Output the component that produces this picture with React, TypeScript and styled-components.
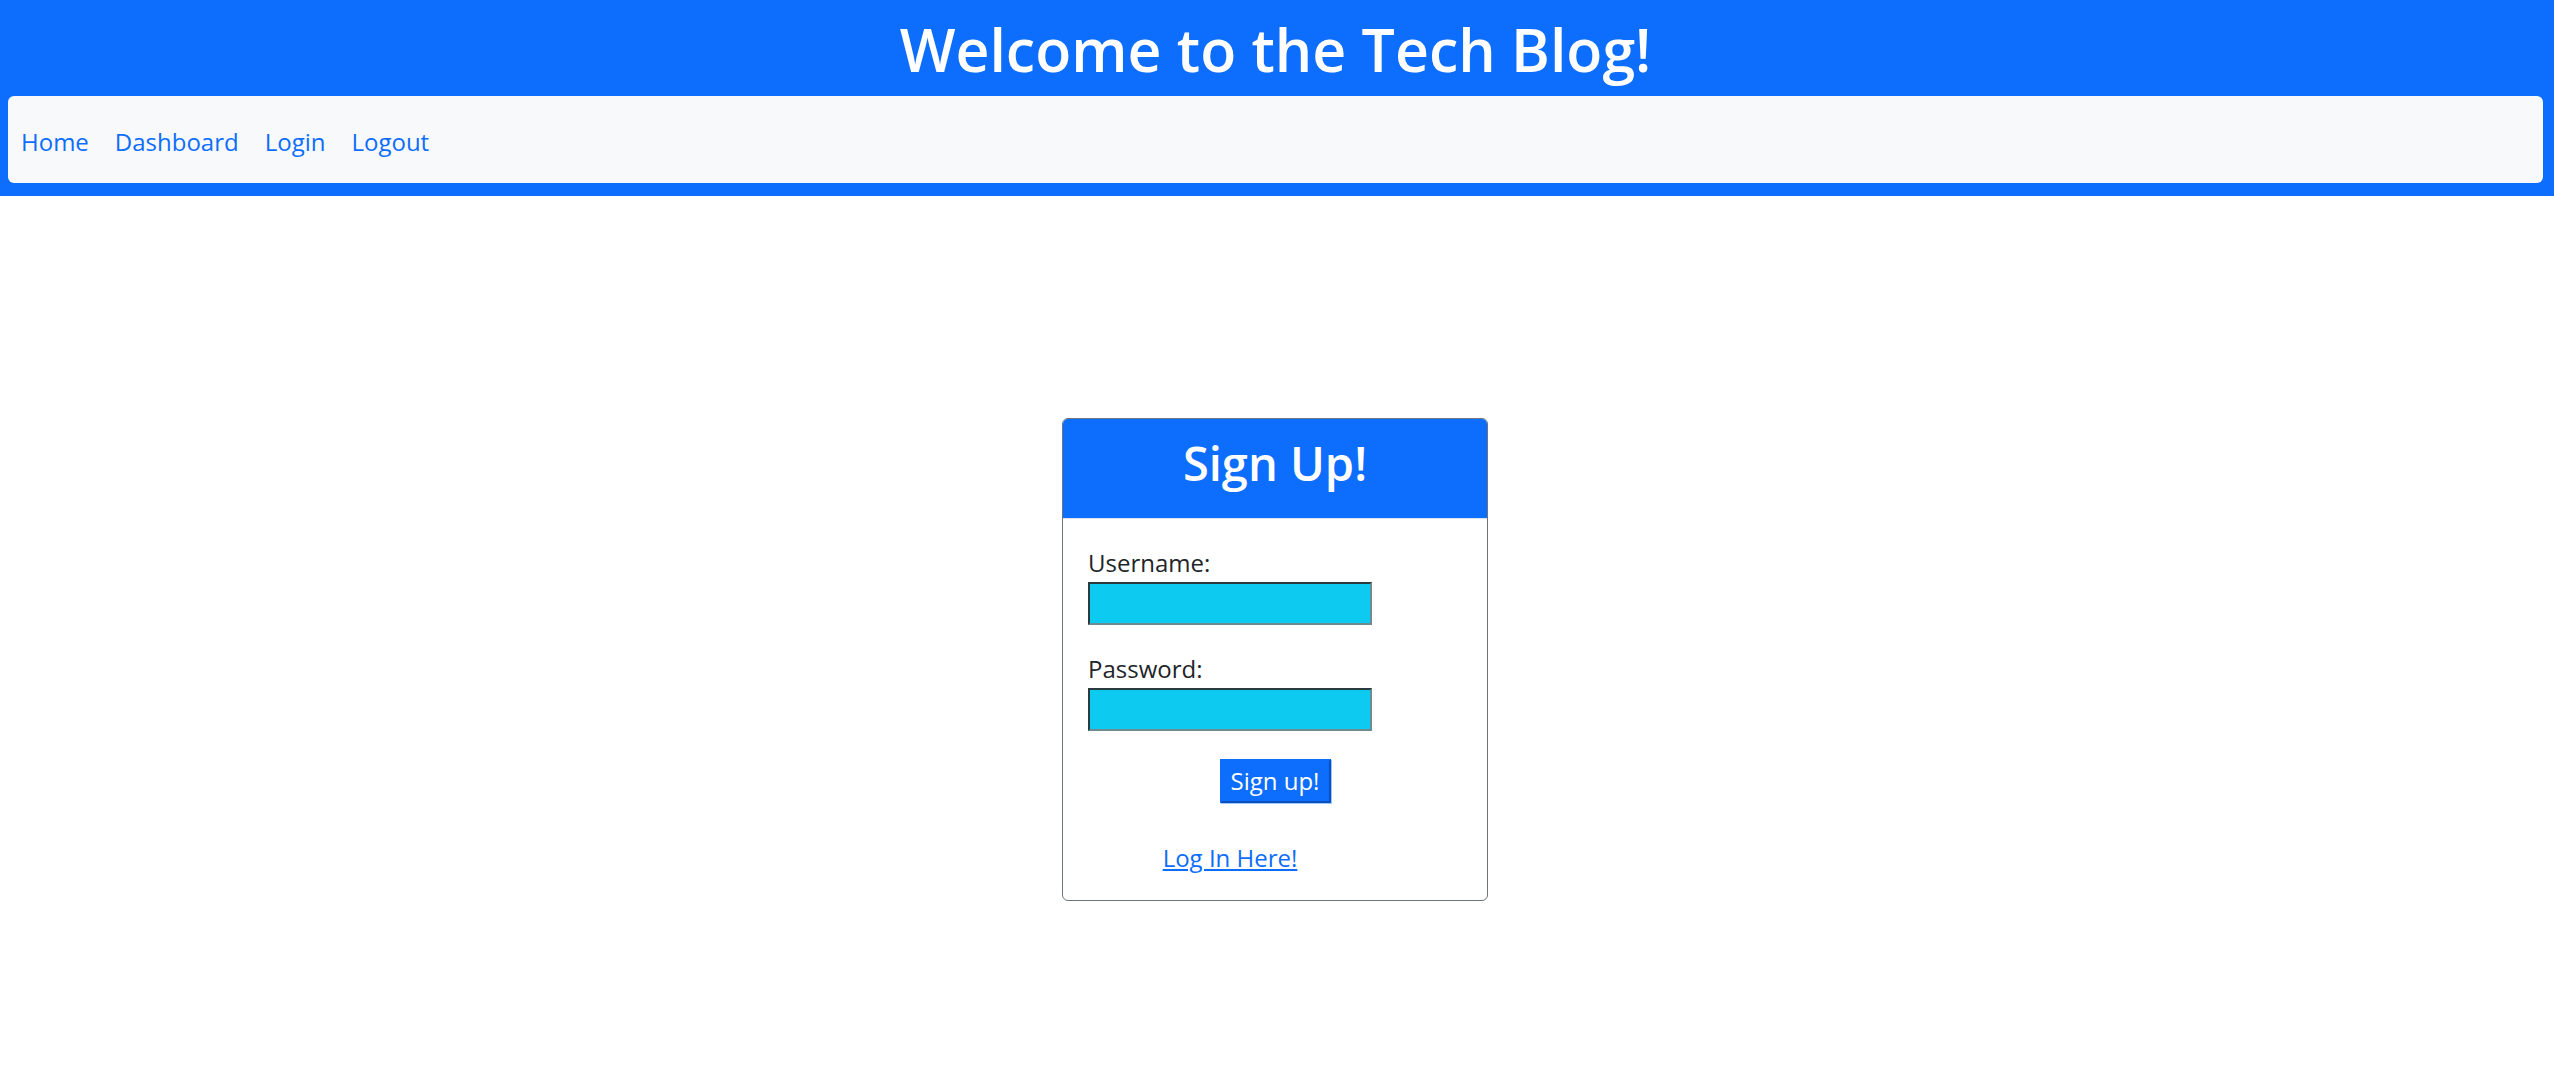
import React from "react"
import styled, {createGlobalStyle} from "styled-components"

const GlobalStyle = createGlobalStyle`
  body {
    margin: 0;
    background: #ffffff;
    font-family: "Open Sans", "Noto Sans", sans-serif;
    color: #212529;
  }
`

const Header = styled.header`
  background: #0d6efd;
  padding: 0 11px 13px 8px;
`

const Title = styled.h1`
  margin: 0;
  height: 96px;
  padding-top: 2px;
  box-sizing: border-box;
  line-height: 94px;
  font-size: 59px;
  font-weight: 600;
  color: #ffffff;
  text-align: center;
`

const NavBar = styled.nav`
  display: flex;
  align-items: flex-start;
  height: 87px;
  box-sizing: border-box;
  padding: 27px 0 22px;
  background: #f8f9fa;
  border-radius: 6px;
`

const NavLink = styled.a`
  padding: 0 13px;
  font-size: 24px;
  line-height: 38px;
  color: #0d6efd;
  text-decoration: none;
  cursor: pointer;
`

const Main = styled.main`
  display: flex;
  justify-content: center;
  padding: 222px 4px 0 0;
`

const Card = styled.div`
  width: 426px;
  box-sizing: border-box;
  border: 1px solid #6c757d;
  border-radius: 6px;
  overflow: hidden;
  background: #ffffff;
`

const CardHeader = styled.div`
  height: 100px;
  box-sizing: border-box;
  padding-bottom: 12px;
  border-bottom: 1px solid #dde3ea;
  background: #0d6efd;
  color: #ffffff;
  text-align: center;
`

const CardTitle = styled.h2`
  margin: 0;
  font-size: 47px;
  font-weight: 600;
  line-height: 88px;
`

const Form = styled.form`
  display: flex;
  flex-direction: column;
  padding: 25px 25px 23px;
`

const Field = styled.div`
  display: flex;
  flex-direction: column;
  align-items: flex-start;
  margin-bottom: 25px;
`

const Label = styled.label`
  font-size: 24px;
  line-height: 38px;
  color: #212529;
`

const Input = styled.input`
  width: 284px;
  height: 43px;
  box-sizing: border-box;
  margin: 0;
  padding: 1px 4px;
  background: #0dcaf0;
  border-style: solid;
  border-width: 2px;
  border-color: #2a3b40 #6f8b92 #6f8b92 #2a3b40;
  font-size: 24px;
  font-family: inherit;
`

const SubmitButton = styled.button`
  align-self: center;
  margin-top: 3px;
  width: 111px;
  height: 44px;
  box-sizing: border-box;
  padding: 0;
  background: #0d6efd;
  color: #ffffff;
  border-style: solid;
  border-width: 2px;
  border-color: #0d6efd #0a4fbf #0a4fbf #0d6efd;
  box-shadow: 1px 1px 0 #9ec5fe;
  font-family: inherit;
  font-size: 24px;
  line-height: 38px;
  cursor: pointer;
`

const LinkRow = styled.div`
  width: 284px;
  margin-top: 36px;
  text-align: center;
`

const TextLink = styled.a`
  font-size: 24px;
  line-height: 38px;
  color: #0d6efd;
  text-decoration: underline;
  cursor: pointer;
`

const navItems = ["Home", "Dashboard", "Login", "Logout"]

export default function App() {
    return (<>
        <GlobalStyle/>
        <Header>
            <Title>Welcome to the Tech Blog!</Title>
            <NavBar>
                {navItems.map(item => <NavLink key={item} href="#">{item}</NavLink>)}
            </NavBar>
        </Header>
        <Main>
            <Card>
                <CardHeader>
                    <CardTitle>Sign Up!</CardTitle>
                </CardHeader>
                <Form onSubmit={e => e.preventDefault()}>
                    <Field>
                        <Label htmlFor="username">Username:</Label>
                        <Input id="username" type="text"/>
                    </Field>
                    <Field>
                        <Label htmlFor="password">Password:</Label>
                        <Input id="password" type="password"/>
                    </Field>
                    <SubmitButton type="submit">Sign up!</SubmitButton>
                    <LinkRow>
                        <TextLink href="#">Log In Here!</TextLink>
                    </LinkRow>
                </Form>
            </Card>
        </Main>
    </>)
}
